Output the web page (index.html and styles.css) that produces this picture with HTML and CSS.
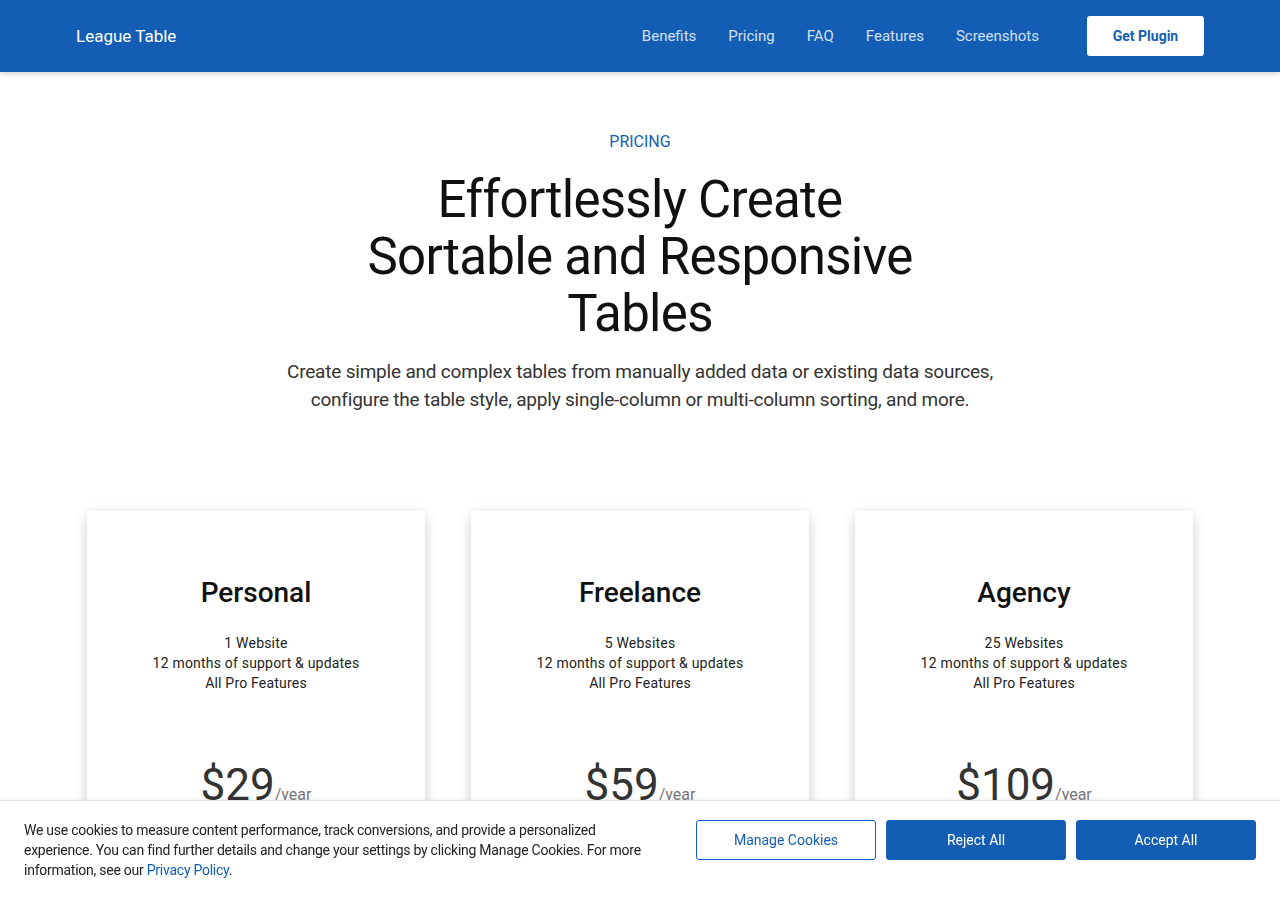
FILE: index.html
```html
<!DOCTYPE html>
<html lang="en">
<head>
<meta charset="utf-8">
<title>League Table – Pricing</title>
<link rel="stylesheet" href="styles.css">
</head>
<body>
<header class="topbar">
  <div class="topbar-inner">
    <a class="brand" href="#">League Table</a>
    <nav class="nav">
      <a href="#">Benefits</a>
      <a href="#">Pricing</a>
      <a href="#">FAQ</a>
      <a href="#">Features</a>
      <a href="#">Screenshots</a>
    </nav>
    <a class="cta" href="#">Get Plugin</a>
  </div>
</header>

<main class="pricing">
  <div class="eyebrow">PRICING</div>
  <h1 class="title">Effortlessly Create Sortable and Responsive Tables</h1>
  <p class="lead">Create simple and complex tables from manually added data or existing data sources, configure the table style, apply single-column or multi-column sorting, and more.</p>

  <div class="cards">
    <div class="card">
      <h2 class="plan">Personal</h2>
      <ul class="feat">
        <li>1 Website</li>
        <li>12 months of support &amp; updates</li>
        <li>All Pro Features</li>
      </ul>
      <div class="price"><span class="amount">$29</span><span class="per">/year</span></div>
    </div>
    <div class="card">
      <h2 class="plan">Freelance</h2>
      <ul class="feat">
        <li>5 Websites</li>
        <li>12 months of support &amp; updates</li>
        <li>All Pro Features</li>
      </ul>
      <div class="price"><span class="amount">$59</span><span class="per">/year</span></div>
    </div>
    <div class="card">
      <h2 class="plan">Agency</h2>
      <ul class="feat">
        <li>25 Websites</li>
        <li>12 months of support &amp; updates</li>
        <li>All Pro Features</li>
      </ul>
      <div class="price"><span class="amount">$109</span><span class="per">/year</span></div>
    </div>
  </div>
</main>

<div class="cookie">
  <p class="cookie-text">We use cookies to measure content performance, track conversions, and provide a personalized experience. You can find further details and change your settings by clicking Manage Cookies. For more information, see our <a href="#">Privacy Policy</a>.</p>
  <div class="cookie-actions">
    <button class="btn btn-outline">Manage Cookies</button>
    <button class="btn btn-solid">Reject All</button>
    <button class="btn btn-solid">Accept All</button>
  </div>
</div>
</body>
</html>
```

FILE: styles.css
```css
* { box-sizing: border-box; }
html, body { margin: 0; padding: 0; }
body {
  font-family: Roboto, "Liberation Sans", sans-serif;
  color: #111;
  background: #fff;
  height: 900px;
  overflow: hidden;
}
a { text-decoration: none; }

.topbar {
  background: #135eb4;
  height: 72px;
  box-shadow: 0 2px 6px rgba(0,0,0,0.18);
  position: relative;
  z-index: 2;
}
.topbar-inner {
  height: 72px;
  padding: 0 76px;
  display: flex;
  align-items: center;
}
.brand {
  color: #fff;
  font-size: 17px;
  flex: 1;
}
.nav {
  display: flex;
  gap: 32px;
  margin-right: 48px;
}
.nav a {
  color: #d2e0f2;
  font-size: 15px;
}
.cta {
  background: #fff;
  color: #135eb4;
  font-weight: 700;
  font-size: 14px;
  width: 117px;
  height: 40px;
  border-radius: 3px;
  display: flex;
  align-items: center;
  justify-content: center;
}

.pricing {
  text-align: center;
  padding-top: 59px;
}
.eyebrow {
  color: #135eb4;
  font-size: 16px;
  line-height: 22px;
}
.title {
  font-weight: 400;
  font-size: 51px;
  line-height: 57px;
  letter-spacing: -0.7px;
  margin: 18px auto 0;
  max-width: 580px;
  color: #111;
}
.lead {
  font-size: 19px;
  line-height: 28px;
  letter-spacing: -0.2px;
  color: #333;
  max-width: 730px;
  margin: 16px auto 0;
}

.cards {
  display: flex;
  justify-content: center;
  gap: 46px;
  margin-top: 97px;
}
.card {
  width: 338px;
  height: 400px;
  background: #fff;
  border-radius: 4px;
  box-shadow: 0 4px 14px rgba(0,0,0,0.18);
  padding-top: 62px;
}
.plan {
  margin: 0;
  font-size: 28px;
  line-height: 40px;
  font-weight: 500;
  color: #111;
}
.feat {
  list-style: none;
  margin: 20px 0 0;
  padding: 0;
  font-size: 14px;
  line-height: 20px;
  color: #222;
  letter-spacing: 0.2px;
}
.price {
  margin-top: 64px;
  color: #333;
}
.amount {
  font-size: 44px;
  line-height: 56px;
}
.per {
  font-size: 16px;
  color: #777;
}

.cookie {
  position: fixed;
  left: 0;
  right: 0;
  bottom: 0;
  height: 100px;
  background: #fff;
  border-top: 1px solid #e2e2e2;
  box-shadow: 0 -1px 4px rgba(0,0,0,0.06);
  display: flex;
  justify-content: space-between;
  padding: 19px 24px 0;
  z-index: 5;
}
.cookie-text {
  margin: 0;
  max-width: 640px;
  font-size: 14px;
  line-height: 20px;
  letter-spacing: -0.25px;
  color: #222;
}
.cookie-text a { color: #135eb4; }
.cookie-actions {
  display: flex;
  gap: 10px;
  align-items: flex-start;
}
.btn {
  width: 180px;
  height: 40px;
  border-radius: 3px;
  font-family: inherit;
  font-size: 14px;
  cursor: pointer;
}
.btn-outline {
  background: #fff;
  border: 1px solid #135eb4;
  color: #135eb4;
}
.btn-solid {
  background: #135eb4;
  border: 1px solid #135eb4;
  color: #fff;
}
```
